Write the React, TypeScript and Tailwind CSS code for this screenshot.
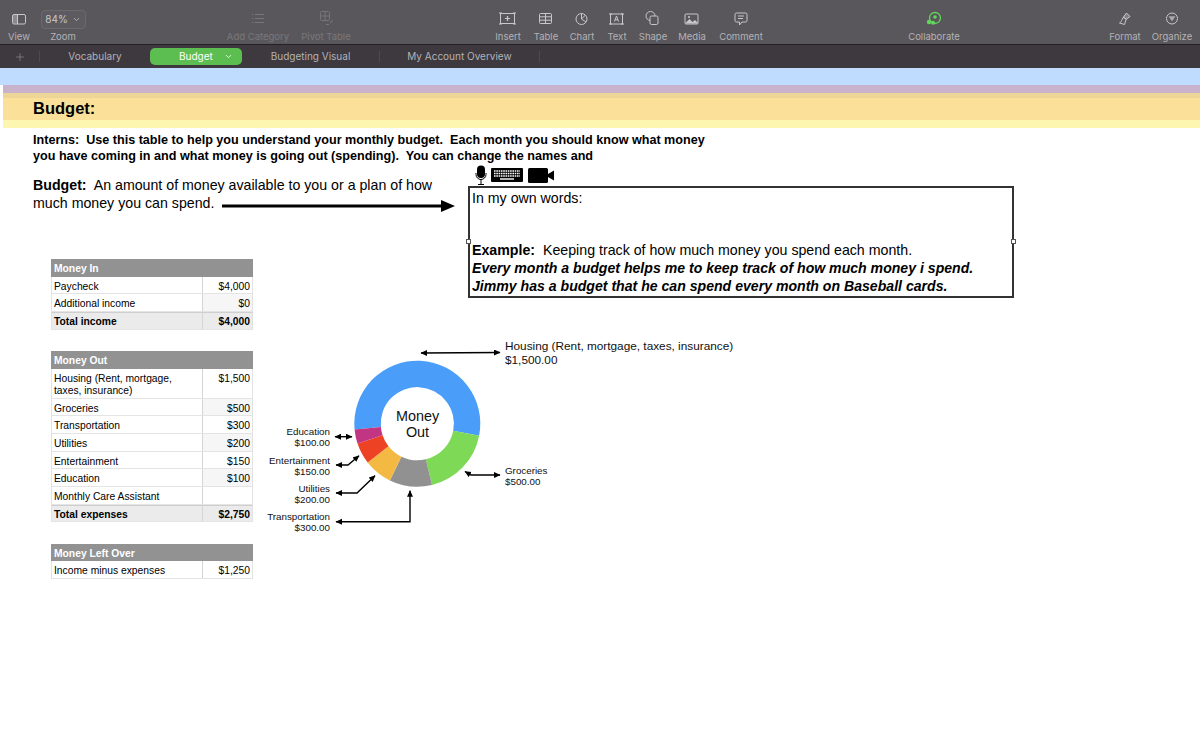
import React from "react";
import { Plus, ChevronDown } from "lucide-react";

// toolbar icon strokes, drawn to match the Numbers toolbar
function ToolIcon({ name, dim }: { name: string; dim?: boolean }) {
  const stroke = dim ? "#77757a" : "#c9c7ca";
  const base = { fill: "none", stroke, strokeWidth: 1 };
  return (
    <svg width="22" height="18" viewBox="0 0 22 18" {...base}>
      {name === "view" && (
        <>
          <rect x="4.500" y="4.500" width="13" height="9.500" rx="1.500" />
          <rect x="5" y="5" width="4" height="8.500" fill={stroke} fillOpacity="0.45" stroke="none" />
          <path d="M9.500 4.500v9.500" />
        </>
      )}
      {name === "list" && (
        <path d="M8 4.500h9M8 8.500h9M8 12.500h9M5 4.500h1.400M5 8.500h1.400M5 12.500h1.400" />
      )}
      {name === "pivot" && (
        <>
          <rect x="5.500" y="1.500" width="9" height="9" rx="1" />
          <path d="M5.500 6h9M10 1.500v9M15 13l2-1.500v-2M11 14.500h3" />
        </>
      )}
      {name === "insert" && (
        <>
          <rect x="3.500" y="3.500" width="14" height="10" />
          <path d="M10.500 6v5M8 8.500h5" strokeWidth="1.200" />
          <path d="M2 3h3M2 14h3M16 3h3M16 14h3" />
        </>
      )}
      {name === "table" && (
        <>
          <rect x="4.500" y="3.500" width="12" height="10" rx="1" />
          <path d="M4.500 6.800h12M4.500 10.200h12M10.500 3.500v10" />
        </>
      )}
      {name === "chart" && (
        <>
          <circle cx="10.500" cy="9" r="5.500" />
          <path d="M10.500 9V3.500M10.500 9l4.500 3M10.500 9l4-4" />
        </>
      )}
      {name === "text" && (
        <>
          <rect x="4.500" y="4" width="12" height="10" />
          <path d="M8.500 11.500l2-5.500 2 5.500M9.200 9.800h2.600" />
          <path d="M3 4h3M3 14h3M15 4h3M15 14h3" />
        </>
      )}
      {name === "shape" && (
        <>
          <circle cx="8.500" cy="6" r="4.500" />
          <rect x="8" y="6" width="8" height="8.500" rx="1.500" fill="#59575b" />
        </>
      )}
      {name === "media" && (
        <>
          <rect x="4" y="4" width="13" height="10" rx="1" />
          <path d="M4.500 13l4-4 3 3 2.500-2 3 3v.500h-12.500z" fill={stroke} stroke="none" />
          <circle cx="8" cy="7" r="1" fill={stroke} stroke="none" />
        </>
      )}
      {name === "comment" && (
        <>
          <path d="M6.500 3h9a1.500 1.500 0 0 1 1.500 1.500v6a1.500 1.500 0 0 1-1.500 1.500H12l-2.500 3v-3h-3A1.500 1.500 0 0 1 5 10.500v-6A1.500 1.500 0 0 1 6.500 3z" />
          <path d="M8 6h6M8 8.500h5" />
        </>
      )}
      {name === "collab" && (
        <>
          <circle cx="12" cy="8" r="5.500" stroke="#62d65a" strokeWidth="1.300" />
          <circle cx="12" cy="7" r="1.800" fill="#62d65a" stroke="none" />
          <circle cx="6" cy="12" r="2.200" fill="#62d65a" stroke="none" />
          <circle cx="10" cy="12.700" r="2" fill="#62d65a" stroke="none" />
        </>
      )}
      {name === "format" && (
        <>
          <path d="M12.500 3l3.500 3.500-4 3-2.500-2.500z" fill={stroke} fillOpacity="0.35" />
          <path d="M9.500 7l2.500 2.500-1.500 5-5-1.500c1.500-1 2-1.500 2-2.500z" />
        </>
      )}
      {name === "organize" && (
        <>
          <circle cx="11" cy="8.500" r="5.500" />
          <path d="M7.500 6.200h7L11 11.500z" fill={stroke} fillOpacity="0.7" stroke="none" />
        </>
      )}
    </svg>
  );
}

function Tool({ label, icon, dim, className }: { label: string; icon?: string; dim?: boolean; className: string }) {
  return (
    <div className={"flex flex-col items-center shrink-0 " + className}>
      <div className="h-[22px] mt-[8px] mb-[1px] flex items-center justify-center">
        {icon && <ToolIcon name={icon} dim={dim} />}
      </div>
      <span className={"text-[9.5px] leading-[12px] whitespace-nowrap " + (dim ? "text-[#79777c]" : "text-[#b4b2b5]")}>{label}</span>
    </div>
  );
}

function Toolbar() {
  return (
    <div className="h-[45px] bg-[#59575b] border-b border-[#232125] flex font-['Inter',sans-serif]">
      <Tool label="View" icon="view" className="w-[38px]" />
      <div className="w-[50px] flex flex-col items-center shrink-0">
        <div className="mt-[10px] h-[19px] w-[45px] border border-[#6b696d] rounded-[4px] flex items-center justify-center gap-[4px] text-[10px] text-[#c9c7ca] bg-[#5d5b5f]">
          84% <ChevronDown size={9} strokeWidth={2} />
        </div>
        <span className="text-[9.5px] leading-[12px] mt-[2px] text-[#b4b2b5]">Zoom</span>
      </div>
      <Tool label="Add Category" icon="list" dim className="w-[68px] ml-[136px]" />
      <Tool label="Pivot Table" icon="pivot" dim className="w-[60px] ml-[4px]" />
      <Tool label="Insert" icon="insert" className="w-[36px] ml-[134px]" />
      <Tool label="Table" icon="table" className="w-[36px] ml-[2px]" />
      <Tool label="Chart" icon="chart" className="w-[36px]" />
      <Tool label="Text" icon="text" className="w-[34px]" />
      <Tool label="Shape" icon="shape" className="w-[38px]" />
      <Tool label="Media" icon="media" className="w-[40px]" />
      <Tool label="Comment" icon="comment" className="w-[54px] ml-[2px]" />
      <Tool label="Collaborate" icon="collab" className="w-[60px] ml-[136px]" />
      <Tool label="Format" icon="format" className="w-[42px] ml-[140px]" />
      <Tool label="Organize" icon="organize" className="w-[46px] ml-[3px]" />
    </div>
  );
}

function Tabs() {
  return (
    <div className="h-[23px] bg-[#3d393f] flex items-center text-[10px] text-[#b4b2b5] font-['Inter',sans-serif]">
      <div className="w-[39px] flex justify-center">
        <Plus size={12} color="#98969a" strokeWidth={1.2} />
      </div>
      <div className="w-px h-[11px] bg-[#4e4b50]" />
      <div className="w-[110px] text-center">Vocabulary</div>
      <div className="w-[92px] h-[17px] rounded-[5px] bg-[#5cbd50] text-white flex items-center shrink-0">
        <span className="ml-[29px]">Budget</span>
        <ChevronDown size={9} strokeWidth={2.2} className="ml-[11px]" />
      </div>
      <div className="w-[137px] text-center">Budgeting Visual</div>
      <div className="w-px h-[11px] bg-[#4e4b50]" />
      <div className="w-[159px] text-center">My Account Overview</div>
      <div className="w-px h-[11px] bg-[#4e4b50]" />
    </div>
  );
}

type Row = { name: string; value?: string; total?: boolean; tall?: boolean };

function MoneyTable({ title, rows }: { title: string; rows: Row[] }) {
  return (
    <div className="w-[202px] text-[10.3px] text-black">
      <div className="h-[17.5px] leading-[20px] bg-[#929292] text-white font-bold pl-[3px]">{title}</div>
      {rows.map((r, i) => (
        <div
          key={r.name}
          className={
            "flex border-x border-x-[#e2e2e2] border-b border-b-[#e4e4e4] " +
            (r.tall ? "h-[30px] " : "h-[17.7px] ") +
            (r.total ? "bg-[#ebebeb] font-bold border-t border-t-[#cfcfcf]" : "")
          }
        >
          <div className={"w-[150px] pl-[2px] shrink-0 " + (r.tall ? "leading-[12px] pt-[4.5px] pr-[24px]" : r.total ? "leading-[17px]" : "leading-[20px]")}>{r.name}</div>
          <div
            className={
              "flex-1 text-right pr-[2px] border-l border-l-[#d5d5d5] " +
              (r.tall ? "leading-[12px] pt-[4.5px]" : r.total ? "leading-[17px]" : "leading-[20px]") +
              (i % 2 === 1 && !r.total ? " bg-[#f6f6f6]" : "")
            }
          >
            {r.value}
          </div>
        </div>
      ))}
    </div>
  );
}

const slices = [
  { v: 1500, c: "#4a9df8" },
  { v: 500, c: "#7ed957" },
  { v: 300, c: "#919191" },
  { v: 200, c: "#f4b942" },
  { v: 150, c: "#ee4224" },
  { v: 100, c: "#c23582" },
];

function donutPaths(cx: number, cy: number, R: number, r: number) {
  const total = slices.reduce((a, s) => a + s.v, 0);
  let a = -95.3;
  return slices.map((s) => {
    const b = a + (s.v / total) * 360;
    const pt = (rad: number, deg: number) => {
      const t = ((deg - 90) * Math.PI) / 180;
      return `${(cx + rad * Math.cos(t)).toFixed(2)} ${(cy + rad * Math.sin(t)).toFixed(2)}`;
    };
    const large = b - a > 180 ? 1 : 0;
    const d = `M${pt(R, a)}A${R} ${R} 0 ${large} 1 ${pt(R, b)}L${pt(r, b)}A${r} ${r} 0 ${large} 0 ${pt(r, a)}Z`;
    a = b;
    return { d, c: s.c };
  });
}

function Label({ lines, className }: { lines: string[]; className: string }) {
  return (
    <div className={"absolute whitespace-nowrap " + className}>
      {lines.map((l) => (
        <div key={l}>{l}</div>
      ))}
    </div>
  );
}

function DonutChart() {
  // chart canvas origin is page (264,340)
  return (
    <div className="relative w-[480px] h-[200px] shrink-0 ml-[11px] mt-[81px] text-[#111]">
      <svg width="480" height="200" className="absolute inset-0">
        <defs>
          <marker id="ah" markerWidth="7" markerHeight="7" refX="6" refY="3" orient="auto-start-reverse" markerUnits="userSpaceOnUse">
            <path d="M0 0L6.500 3L0 6z" fill="#000" />
          </marker>
        </defs>
        {donutPaths(153.3, 83.7, 63, 36.6).map((p) => (
          <path key={p.c} d={p.d} fill={p.c} />
        ))}
        <g fill="none" stroke="#000" strokeWidth="1.400">
          <polyline points="157,13 236,12.500" markerStart="url(#ah)" markerEnd="url(#ah)" />
          <polyline points="201,131.500 207,135 236,135" markerStart="url(#ah)" markerEnd="url(#ah)" />
          <polyline points="71,96.700 88,96.700" markerStart="url(#ah)" markerEnd="url(#ah)" />
          <polyline points="72,125 84,125 95,115.700" markerStart="url(#ah)" markerEnd="url(#ah)" />
          <polyline points="72,153 93,153 111,135.700" markerStart="url(#ah)" markerEnd="url(#ah)" />
          <polyline points="72,181.700 146,181.700 146,150.700" markerStart="url(#ah)" markerEnd="url(#ah)" />
        </g>
      </svg>
      <div className="absolute left-[125px] top-[68px] w-[57px] text-center text-[14.4px] leading-[16px]">
        <div>Money</div>
        <div>Out</div>
      </div>
      <Label lines={["Housing (Rent, mortgage, taxes, insurance)", "$1,500.00"]} className="left-[241px] top-[-1px] text-[11.8px] leading-[14px]" />
      <Label lines={["Groceries", "$500.00"]} className="left-[241px] top-[125px] text-[9.8px] leading-[11px]" />
      <Label lines={["Education", "$100.00"]} className="right-[414px] top-[86px] text-right text-[9.8px] leading-[11px]" />
      <Label lines={["Entertainment", "$150.00"]} className="right-[414px] top-[115px] text-right text-[9.8px] leading-[11px]" />
      <Label lines={["Utilities", "$200.00"]} className="right-[414px] top-[143px] text-right text-[9.8px] leading-[11px]" />
      <Label lines={["Transportation", "$300.00"]} className="right-[414px] top-[171px] text-right text-[9.8px] leading-[11px]" />
    </div>
  );
}

function RecordIcons() {
  return (
    <div className="h-[22px] flex items-center pl-[7px]">
      <svg width="12" height="20" viewBox="0 0 12 20">
        <rect x="2" y="0.500" width="8" height="12.500" rx="4" fill="#000" />
        <path d="M1 8v1.500a5 5 0 0 0 10 0V8M6 14.500V19M3 19.500h6" fill="none" stroke="#000" strokeWidth="1" />
      </svg>
      <svg width="32" height="14" viewBox="0 0 32 14" className="ml-[4px]">
        <rect width="32" height="14" rx="1" fill="#000" />
        <path d="M3 3h26M3 5.500h26M3 8h26" stroke="#fff" strokeWidth="1.400" strokeDasharray="1.600 0.700" />
        <path d="M9 11h14" stroke="#fff" strokeWidth="1.400" />
      </svg>
      <svg width="26" height="15" viewBox="0 0 26 15" className="ml-[5px]">
        <rect width="20" height="15" rx="1.500" fill="#000" />
        <path d="M20 6l6-3.500v10l-6-3.500z" fill="#000" />
      </svg>
    </div>
  );
}

export default function App() {
  return (
    <div className="w-[1200px] h-[750px] bg-white overflow-hidden font-['Liberation_Sans',sans-serif] text-black">
      <Toolbar />
      <Tabs />
      <div className="h-[17px] bg-[#bfdcff]" />
      <div className="ml-[3px] h-[8px] bg-[#c9b2cb]" />
      <div className="ml-[3px] h-[27px] bg-[#fbe09a] border-t-[5px] border-[#ecd596] pl-[30px] text-[16.5px] leading-[21px] font-bold">Budget:</div>
      <div className="ml-[3px] h-[8px] bg-[#fdf6b0]" />

      <div className="pl-[33px] pt-[4px] h-[36px] text-[12.6px] leading-[16px] font-bold whitespace-pre">
        <div>Interns:  Use this table to help you understand your monthly budget.  Each month you should know what money</div>
        <div>you have coming in and what money is going out (spending).  You can change the names and</div>
      </div>

      <div className="h-[95px] flex">
        <div className="w-[468px] pl-[33px] pt-[13px] text-[14.2px] leading-[17px] shrink-0">
          <div className="whitespace-pre">
            <span className="font-bold">Budget:</span>  An amount of money available to you or a plan of how
          </div>
          <div className="flex items-center whitespace-nowrap">
            <span>much money you can spend.</span>
            <svg width="233" height="14" className="ml-[8px] mt-[5px] shrink-0">
              <path d="M0 7h221" stroke="#000" strokeWidth="3" />
              <path d="M219 1l14 6-14 6z" fill="#000" />
            </svg>
          </div>
        </div>
        <div className="w-[546px] shrink-0">
          <RecordIcons />
          <div className="relative h-[112px] border-2 border-[#333] bg-white pl-[2px] text-[14.2px] leading-[17.8px]">
            <div className="pt-[2px] h-[54px]">In my own words:</div>
            <div className="whitespace-pre">
              <span className="font-bold">Example:</span>  Keeping track of how much money you spend each month.
            </div>
            <div className="font-bold italic text-[14.1px]">Every month a budget helps me to keep track of how much money i spend.</div>
            <div className="font-bold italic text-[14.1px]">Jimmy has a budget that he can spend every month on Baseball cards.</div>
            <div className="absolute left-[-4px] top-[51px] w-[5px] h-[5px] bg-white border border-[#555]" />
            <div className="absolute right-[-4px] top-[51px] w-[5px] h-[5px] bg-white border border-[#555]" />
          </div>
        </div>
      </div>

      <div className="flex pl-[51px]">
        <div className="flex flex-col gap-[21.5px] shrink-0">
          <MoneyTable
            title="Money In"
            rows={[
              { name: "Paycheck", value: "$4,000" },
              { name: "Additional income", value: "$0" },
              { name: "Total income", value: "$4,000", total: true },
            ]}
          />
          <MoneyTable
            title="Money Out"
            rows={[
              { name: "Housing (Rent, mortgage, taxes, insurance)", value: "$1,500", tall: true },
              { name: "Groceries", value: "$500" },
              { name: "Transportation", value: "$300" },
              { name: "Utilities", value: "$200" },
              { name: "Entertainment", value: "$150" },
              { name: "Education", value: "$100" },
              { name: "Monthly Care Assistant", value: "" },
              { name: "Total expenses", value: "$2,750", total: true },
            ]}
          />
          <MoneyTable title="Money Left Over" rows={[{ name: "Income minus expenses", value: "$1,250" }]} />
        </div>
        <DonutChart />
      </div>
    </div>
  );
}
